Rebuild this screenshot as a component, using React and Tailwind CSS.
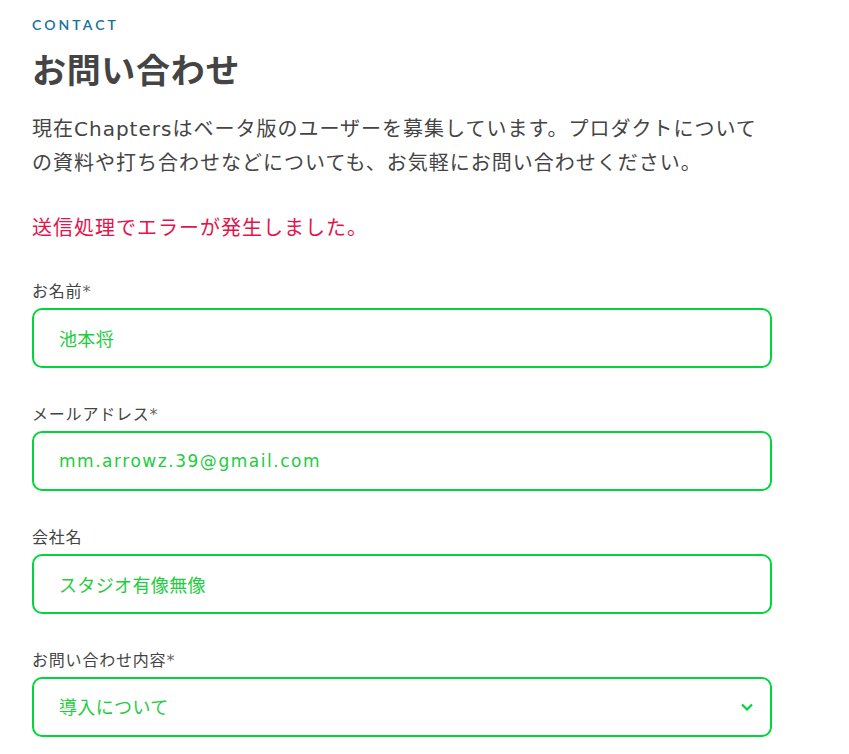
import React from "react";

const fontStack = "font-['DejaVu_Sans','Noto_Sans_CJK_JP',sans-serif]";

const Field = ({ label, required, children }) => (
    <div className="flex flex-col">
        <label className="text-[16px] leading-[20px] tracking-[0.05em] text-[#444] mb-[6px]">
            {label}
            {required && <span className="text-[#666]">*</span>}
        </label>
        {children}
    </div>
);

const App = () => {
    return (
        <div className={`min-h-screen bg-white ${fontStack}`}>
            <div className="w-[740px] ml-8 pt-[16px]">
                {/* Header */}
                <p className="text-[14px] leading-[18px] font-semibold tracking-[0.22em] text-[#15719b] font-['Lato',sans-serif]">
                    CONTACT
                </p>
                <h1 className="mt-[13px] text-[34px] leading-[44px] font-bold tracking-[0.02em] text-[#444] font-['Noto_Sans_CJK_JP',sans-serif]">
                    お問い合わせ
                </h1>
                <p className="mt-[21px] text-[20px] leading-[34px] text-[#444] tracking-[0.05em]">
                    現在Chaptersはベータ版のユーザーを募集しています。プロダクトについての資料や打ち合わせなどについても、お気軽にお問い合わせください。
                </p>
                <p className="mt-[31px] text-[20px] leading-[34px] tracking-[0.05em] text-[#e3134b]">
                    送信処理でエラーが発生しました。
                </p>

                {/* Form */}
                <div className="mt-[37px] flex flex-col gap-[37px]">
                    <Field label="お名前" required>
                        <input
                            defaultValue="池本将"
                            className="h-[60px] w-full rounded-[10px] border-2 border-[#00d63b] px-[25px] text-[18px] tracking-[0.02em] text-[#22cc3e] outline-none"
                        />
                    </Field>
                    <Field label="メールアドレス" required>
                        <input
                            defaultValue="mm.arrowz.39@gmail.com"
                            className="h-[60px] w-full rounded-[10px] border-2 border-[#00d63b] px-[25px] text-[17px] tracking-[0.09em] text-[#22cc3e] outline-none"
                        />
                    </Field>
                    <Field label="会社名">
                        <input
                            defaultValue="スタジオ有像無像"
                            className="h-[60px] w-full rounded-[10px] border-2 border-[#00d63b] px-[25px] text-[18px] tracking-[0.02em] text-[#22cc3e] outline-none"
                        />
                    </Field>
                    <Field label="お問い合わせ内容" required>
                        <div className="relative">
                            <select
                                defaultValue="intro"
                                className="h-[60px] w-full appearance-none rounded-[10px] border-2 border-[#00d63b] bg-white px-[25px] text-[18px] tracking-[0.02em] text-[#22cc3e] outline-none"
                            >
                                <option value="intro">導入について</option>
                            </select>
                            <svg
                                className="pointer-events-none absolute right-[18px] top-1/2 -translate-y-1/2"
                                width="14"
                                height="14"
                                viewBox="0 0 14 14"
                                fill="none"
                            >
                                <path d="M2 4.5 L7 9.5 L12 4.5" stroke="#00d63b" strokeWidth="2.2" />
                            </svg>
                        </div>
                    </Field>
                </div>
            </div>
        </div>
    );
};

export default App;
